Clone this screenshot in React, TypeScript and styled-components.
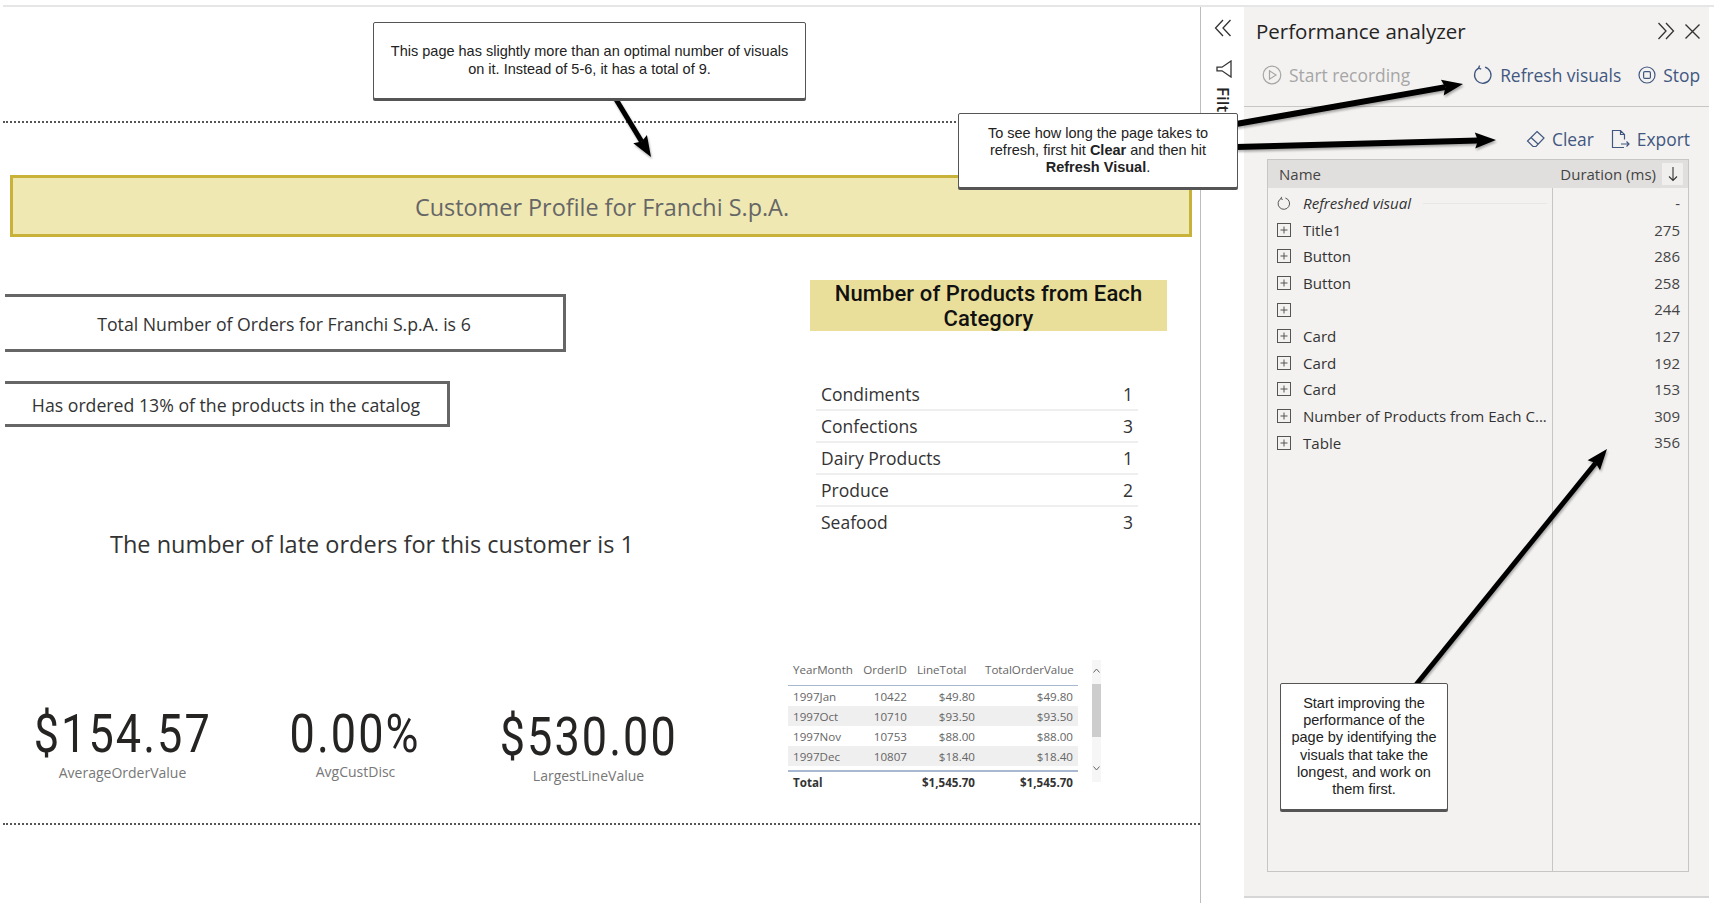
import React from "react";
import styled, { createGlobalStyle } from "styled-components";

const GlobalStyle = createGlobalStyle`
  html, body {
    margin: 0;
    padding: 0;
    background: #fff;
    font-family: "Open Sans", "Noto Sans", sans-serif;
  }
  * { box-sizing: border-box; }
`;

const Page = styled.div`
  position: relative;
  width: 1714px;
  height: 905px;
  overflow: hidden;
  padding-top: 5px;
`;

const TopStrip = styled.div`
  height: 2px;
  margin-left: 3px;
  background: #e6e6e6;
`;

const Shell = styled.div`
  display: flex;
  width: 1706px;
  height: 896px;
  margin-left: 3px;
`;

const Report = styled.main`
  width: 1197px;
  flex: none;
`;

const HeaderBand = styled.div`
  height: 116px;
  border-bottom: 2px dotted #555;
`;

const Banner = styled.h1`
  display: flex;
  align-items: center;
  justify-content: center;
  width: 1182px;
  height: 62px;
  margin: 52px 0 0 7px;
  padding: 2px 0 0 2px;
  background: #efe8b3;
  border: 3px solid #c9b239;
  font-size: 23.4px;
  font-weight: 400;
  color: #666;
`;

const VisualArea = styled.div`
  display: grid;
  grid-template-columns: 785px 1fr;
  height: 545px;
  margin-top: 43px;
  border-bottom: 2px dotted #555;
`;

const LeftColumn = styled.section`
  display: flex;
  flex-direction: column;
  align-items: flex-start;
`;

const RightColumn = styled.section`
  display: flex;
  flex-direction: column;
  align-items: flex-start;
`;

const FactBox = styled.div<{ $width: number; $height: number; $top: number }>`
  display: flex;
  align-items: center;
  justify-content: center;
  width: ${(p) => p.$width}px;
  height: ${(p) => p.$height}px;
  margin: ${(p) => p.$top}px 0 0 2px;
  padding-top: 1px;
  border: 3px solid #666;
  border-left: 0;
  font-size: 17.7px;
  color: #333;
  white-space: nowrap;
`;

const LateOrders = styled.div`
  margin: 100px 0 0 107px;
  font-size: 23.5px;
  line-height: 34px;
  color: #333;
  white-space: nowrap;
`;

const KpiRow = styled.div`
  display: grid;
  grid-template-columns: repeat(3, 233px);
  margin: 146px 0 0 3px;
`;

const Kpi = styled.div<{ $drop: number }>`
  display: flex;
  flex-direction: column;
  align-items: center;
  padding-top: ${(p) => p.$drop}px;
`;

const KpiValue = styled.div`
  font-family: "Roboto", sans-serif;
  font-size: 53px;
  font-weight: 400;
  line-height: 54px;
  letter-spacing: 2.4px;
  color: #252423;
  transform: scaleX(0.85);
`;

const KpiLabel = styled.div<{ $gap: number }>`
  margin-top: ${(p) => p.$gap}px;
  font-size: 14px;
  line-height: 20px;
  color: #777;
`;

const CategoryTitle = styled.h2`
  width: 357px;
  height: 51px;
  margin: 0 0 0 22px;
  padding-top: 1px;
  background: #e9df9a;
  font-family: "Roboto", sans-serif;
  font-size: 22px;
  font-weight: 500;
  line-height: 25px;
  letter-spacing: 0.1px;
  text-align: center;
  color: #111;
`;

const CategoryTable = styled.div`
  width: 322px;
  margin: 48px 0 0 28px;
`;

const CategoryRow = styled.div`
  display: flex;
  justify-content: space-between;
  height: 32px;
  padding: 0 5px;
  border-bottom: 2px solid #eeeeee;
  font-size: 17.5px;
  line-height: 30px;
  color: #333;
  &:last-child { border-bottom: 0; }
`;

const OrdersWrap = styled.div`
  display: flex;
  gap: 14px;
  margin-top: 121px;
`;

const OrdersTable = styled.div`
  width: 290px;
  font-size: 11.6px;
`;

const OrdersRow = styled.div<{ $kind?: "head" | "odd" | "even" | "total" }>`
  display: grid;
  grid-template-columns: 70px 54px 68px 98px;
  align-items: center;
  height: ${(p) => (p.$kind === "head" ? 26 : p.$kind === "total" ? 22 : 20)}px;
  padding-bottom: ${(p) => (p.$kind === "head" ? 7 : 0)}px;
  background: ${(p) => (p.$kind === "even" ? "#f0efef" : "transparent")};
  border-bottom: ${(p) => (p.$kind === "head" ? "1px solid #a8b8d0" : "0")};
  border-top: ${(p) => (p.$kind === "total" ? "2px solid #a8b8d0" : "0")};
  margin-top: ${(p) => (p.$kind === "total" ? 4 : 0)}px;
  font-weight: ${(p) => (p.$kind === "total" ? 700 : 400)};
  color: ${(p) => (p.$kind === "total" ? "#333" : "#666")};
`;

const OrdersCell = styled.div<{ $right?: boolean }>`
  padding: 0 5px;
  text-align: ${(p) => (p.$right ? "right" : "left")};
  white-space: nowrap;
`;

const ScrollTrack = styled.div`
  position: relative;
  display: flex;
  flex-direction: column;
  justify-content: space-between;
  align-items: center;
  width: 9px;
  height: 122px;
  padding: 8px 0 11px;
  background: #f6f6f6;
  color: #666;
`;

const ScrollThumb = styled.div`
  position: absolute;
  top: 24px;
  left: 0;
  width: 9px;
  height: 53px;
  background: #cdcdcd;
`;

const FilterRail = styled.aside`
  width: 44px;
  flex: none;
  display: flex;
  flex-direction: column;
  align-items: center;
  padding-top: 12px;
  border-left: 1px solid #bdbdbd;
  color: #333;
`;

const FunnelSlot = styled.div`
  margin: 23px 0 0 3px;
  height: 18px;
`;

const RailLabel = styled.div`
  margin-top: 9px;
  writing-mode: vertical-rl;
  font-size: 17px;
  font-weight: 600;
  line-height: 20px;
  color: #252423;
`;

const Panel = styled.aside`
  width: 465px;
  height: 891px;
  flex: none;
  display: flex;
  flex-direction: column;
  background: #f3f2f1;
  border-bottom: 2px solid #d6d6d6;
`;

const PanelHeader = styled.header`
  display: flex;
  align-items: center;
  justify-content: space-between;
  height: 50px;
  padding: 0 8px 2px 12px;
  font-size: 20.5px;
  color: #252423;
`;

const PanelIcons = styled.div`
  display: flex;
  align-items: center;
  gap: 9px;
`;

const RecordBar = styled.div`
  display: flex;
  align-items: center;
  height: 50px;
  padding: 0 9px 13px 18px;
  border-bottom: 1px solid #c8c6c4;
`;

const ExportBar = styled.div`
  display: flex;
  align-items: center;
  justify-content: flex-end;
  gap: 17px;
  height: 52px;
  padding: 12px 19px 0 0;
`;

const ToolButton = styled.div<{ $off?: boolean; $push?: number }>`
  display: flex;
  align-items: center;
  gap: 7px;
  margin-left: ${(p) => p.$push ?? 0}px;
  font-size: 17.4px;
  white-space: nowrap;
  color: ${(p) => (p.$off ? "#a6a6a6" : "#41577f")};
`;

const Analyzer = styled.div`
  display: flex;
  flex-direction: column;
  width: 422px;
  height: 713px;
  margin-left: 23px;
  border: 1px solid #c8c6c4;
`;

const AnalyzerHead = styled.div`
  display: flex;
  align-items: center;
  justify-content: space-between;
  height: 28px;
  padding: 0 5px 0 11px;
  background: #e1dfdd;
  font-size: 15px;
  color: #444;
`;

const SortGroup = styled.div`
  display: flex;
  align-items: center;
  gap: 6px;
`;

const SortBox = styled.div`
  display: flex;
  align-items: center;
  justify-content: center;
  width: 21px;
  height: 22px;
  background: #f0efee;
`;

const AnalyzerBody = styled.div`
  flex: 1;
  display: grid;
  grid-template-columns: 285px 1fr;
`;

const NameColumn = styled.div`
  padding-top: 2px;
  border-right: 1px solid #c8c6c4;
`;

const DurationColumn = styled.div`
  padding-top: 2px;
`;

const NameRow = styled.div<{ $italic?: boolean }>`
  display: flex;
  align-items: center;
  gap: 12px;
  height: 26.6px;
  padding-left: 9px;
  font-size: 15.1px;
  font-style: ${(p) => (p.$italic ? "italic" : "normal")};
  color: #333;
  white-space: nowrap;
`;

const RingSlot = styled.div`
  display: flex;
  justify-content: center;
  width: 14px;
`;

const FaintRule = styled.div`
  flex: 1;
  height: 1px;
  margin-right: 5px;
  background: #e9e7e6;
`;

const DurationRow = styled.div`
  height: 26.6px;
  padding-right: 8px;
  font-size: 15px;
  line-height: 26.6px;
  text-align: right;
  color: #444;
`;

const ArrowLayer = styled.svg`
  position: absolute;
  inset: 0;
  z-index: 1;
  pointer-events: none;
  filter: drop-shadow(1px 2px 1px rgba(0, 0, 0, 0.3));
`;

const Callout = styled.div<{ $x: number; $y: number; $w: number; $h: number }>`
  position: absolute;
  z-index: 2;
  left: ${(p) => p.$x}px;
  top: ${(p) => p.$y}px;
  width: ${(p) => p.$w}px;
  height: ${(p) => p.$h}px;
  display: flex;
  align-items: center;
  justify-content: center;
  padding: 0 8px;
  background: #fff;
  border: 1px solid #555;
  border-radius: 2px;
  box-shadow: 0 2px 0 #555;
  font-family: "Liberation Sans", Arial, sans-serif;
  font-size: 14.5px;
  line-height: 17.3px;
  text-align: center;
  color: #222;
`;

const Arrow = ({ tail, tip, width = 5 }: { tail: number[]; tip: number[]; width?: number }) => {
  const dx = tip[0] - tail[0];
  const dy = tip[1] - tail[1];
  const len = Math.hypot(dx, dy);
  const ux = dx / len;
  const uy = dy / len;
  const baseX = tip[0] - ux * 18;
  const baseY = tip[1] - uy * 18;
  const head = [
    `${tip[0]},${tip[1]}`,
    `${baseX - uy * 8 - ux * 3},${baseY + ux * 8 - uy * 3}`,
    `${baseX},${baseY}`,
    `${baseX + uy * 8 - ux * 3},${baseY - ux * 8 - uy * 3}`,
  ].join(" ");
  return (
    <g>
      <line x1={tail[0]} y1={tail[1]} x2={baseX} y2={baseY} stroke="#000" strokeWidth={width} />
      <polygon points={head} fill="#000" />
    </g>
  );
};

const ChevronsIcon = ({ left }: { left?: boolean }) => (
  <svg width="18" height="18" viewBox="0 0 18 18" fill="none" stroke="#333" strokeWidth="1.3">
    <path d={left ? "M9 1 1.5 9 9 17M16.5 1 9 9l7.5 8" : "M9 1l7.5 8L9 17M1.5 1 9 9l-7.5 8"} />
  </svg>
);

const CloseIcon = () => (
  <svg width="17" height="17" viewBox="0 0 17 17" fill="none" stroke="#333" strokeWidth="1.4">
    <path d="M1.5 1.5l14 14M15.5 1.5l-14 14" />
  </svg>
);

const FunnelIcon = () => (
  <svg width="16" height="18" viewBox="0 0 16 18" fill="none" stroke="#333" strokeWidth="1.3">
    <path d="M15 1 6 7.2H1v3.6h5L15 17z" />
  </svg>
);

const PlayIcon = () => (
  <svg width="20" height="20" viewBox="0 0 20 20" fill="none" stroke="#a6a6a6" strokeWidth="1.2">
    <circle cx="10" cy="10" r="8.8" />
    <path d="M7.5 5.8 14 10l-6.5 4.2z" />
  </svg>
);

const RefreshIcon = ({ size = 20, color = "#41577f" }: { size?: number; color?: string }) => (
  <svg width={size} height={size} viewBox="0 0 20 20" fill="none" stroke={color} strokeWidth="1.3">
    <path d="M12 2.2A8.2 8.2 0 1 1 6 2.8" />
    <path d="M6.6 .6 5.6 3.2 8.2 4.2" />
  </svg>
);

const StopIcon = () => (
  <svg width="18" height="18" viewBox="0 0 18 18" fill="none" stroke="#41577f" strokeWidth="1.2">
    <circle cx="9" cy="9" r="8" />
    <rect x="5.6" y="5.6" width="6.8" height="6.8" rx="1.2" />
  </svg>
);

const EraserIcon = () => (
  <svg width="19" height="18" viewBox="0 0 19 18" fill="none" stroke="#41577f" strokeWidth="1.2">
    <path d="M11 1.5 18 8l-8 8.5H7L1.5 11zM5 7.5l7 6.5" />
  </svg>
);

const ExportIcon = () => (
  <svg width="19" height="20" viewBox="0 0 19 20" fill="none" stroke="#41577f" strokeWidth="1.2">
    <path d="M13 18.5H1.5v-17h8l4 4v5M9.5 1.5v4h4M10 15h8M15.5 12.5 18 15l-2.5 2.5" />
  </svg>
);

const ExpandIcon = () => (
  <svg width="14" height="14" viewBox="0 0 14 14" fill="none" stroke="#555" strokeWidth="1">
    <rect x=".5" y=".5" width="13" height="13" />
    <path d="M7 3.5v7M3.5 7h7" />
  </svg>
);

const SortIcon = () => (
  <svg width="12" height="16" viewBox="0 0 12 16" fill="none" stroke="#333" strokeWidth="1.1">
    <path d="M6 1v13.5M2 10.5l4 4 4-4" />
  </svg>
);

const ScrollChevron = ({ up }: { up?: boolean }) => (
  <svg width="7" height="5" viewBox="0 0 7 5" fill="none" stroke="#666" strokeWidth="1">
    <path d={up ? "M.5 4.5 3.5 1l3 3.5" : "M.5 .5 3.5 4l3-3.5"} />
  </svg>
);

const categories = [
  ["Condiments", "1"],
  ["Confections", "3"],
  ["Dairy Products", "1"],
  ["Produce", "2"],
  ["Seafood", "3"],
];

const orders = [
  ["1997Jan", "10422", "$49.80", "$49.80"],
  ["1997Oct", "10710", "$93.50", "$93.50"],
  ["1997Nov", "10753", "$88.00", "$88.00"],
  ["1997Dec", "10807", "$18.40", "$18.40"],
];

const visuals = [
  ["Title1", "275"],
  ["Button", "286"],
  ["Button", "258"],
  ["", "244"],
  ["Card", "127"],
  ["Card", "192"],
  ["Card", "153"],
  ["Number of Products from Each C...", "309"],
  ["Table", "356"],
];

const kpis = [
  { value: "$154.57", label: "AverageOrderValue", drop: 0, gap: 2 },
  { value: "0.00%", label: "AvgCustDisc", drop: 0, gap: 1 },
  { value: "$530.00", label: "LargestLineValue", drop: 3, gap: 2 },
];

export default function App() {
  return (
    <Page>
      <GlobalStyle />
      <TopStrip />
      <Shell>
        <Report>
          <HeaderBand />
          <Banner>Customer Profile for Franchi S.p.A.</Banner>
          <VisualArea>
            <LeftColumn>
              <FactBox $width={561} $height={58} $top={14}>
                Total Number of Orders for Franchi S.p.A. is 6
              </FactBox>
              <FactBox $width={445} $height={46} $top={29}>
                Has ordered 13% of the products in the catalog
              </FactBox>
              <LateOrders>The number of late orders for this customer is 1</LateOrders>
              <KpiRow>
                {kpis.map((k) => (
                  <Kpi key={k.label} $drop={k.drop}>
                    <KpiValue>{k.value}</KpiValue>
                    <KpiLabel $gap={k.gap}>{k.label}</KpiLabel>
                  </Kpi>
                ))}
              </KpiRow>
            </LeftColumn>
            <RightColumn>
              <CategoryTitle>Number of Products from Each Category</CategoryTitle>
              <CategoryTable>
                {categories.map(([name, count]) => (
                  <CategoryRow key={name}>
                    <span>{name}</span>
                    <span>{count}</span>
                  </CategoryRow>
                ))}
              </CategoryTable>
              <OrdersWrap>
                <OrdersTable>
                  <OrdersRow $kind="head">
                    <OrdersCell>YearMonth</OrdersCell>
                    <OrdersCell $right>OrderID</OrdersCell>
                    <OrdersCell>LineTotal</OrdersCell>
                    <OrdersCell $right>TotalOrderValue</OrdersCell>
                  </OrdersRow>
                  {orders.map((o, i) => (
                    <OrdersRow key={o[0]} $kind={i % 2 ? "even" : "odd"}>
                      <OrdersCell>{o[0]}</OrdersCell>
                      <OrdersCell $right>{o[1]}</OrdersCell>
                      <OrdersCell $right>{o[2]}</OrdersCell>
                      <OrdersCell $right>{o[3]}</OrdersCell>
                    </OrdersRow>
                  ))}
                  <OrdersRow $kind="total">
                    <OrdersCell>Total</OrdersCell>
                    <OrdersCell $right />
                    <OrdersCell $right>$1,545.70</OrdersCell>
                    <OrdersCell $right>$1,545.70</OrdersCell>
                  </OrdersRow>
                </OrdersTable>
                <ScrollTrack>
                  <ScrollChevron up />
                  <ScrollThumb />
                  <ScrollChevron />
                </ScrollTrack>
              </OrdersWrap>
            </RightColumn>
          </VisualArea>
        </Report>

        <FilterRail>
          <ChevronsIcon left />
          <FunnelSlot>
            <FunnelIcon />
          </FunnelSlot>
          <RailLabel>Filters</RailLabel>
        </FilterRail>

        <Panel>
          <PanelHeader>
            Performance analyzer
            <PanelIcons>
              <ChevronsIcon />
              <CloseIcon />
            </PanelIcons>
          </PanelHeader>
          <RecordBar>
            <ToolButton $off>
              <PlayIcon />
              Start recording
            </ToolButton>
            <ToolButton $push={63}>
              <RefreshIcon />
              Refresh visuals
            </ToolButton>
            <ToolButton $push={17}>
              <StopIcon />
              Stop
            </ToolButton>
          </RecordBar>
          <ExportBar>
            <ToolButton>
              <EraserIcon />
              Clear
            </ToolButton>
            <ToolButton>
              <ExportIcon />
              Export
            </ToolButton>
          </ExportBar>
          <Analyzer>
            <AnalyzerHead>
              Name
              <SortGroup>
                Duration (ms)
                <SortBox>
                  <SortIcon />
                </SortBox>
              </SortGroup>
            </AnalyzerHead>
            <AnalyzerBody>
              <NameColumn>
                <NameRow $italic>
                  <RingSlot>
                    <RefreshIcon size={17} color="#444" />
                  </RingSlot>
                  Refreshed visual
                  <FaintRule />
                </NameRow>
                {visuals.map(([name], i) => (
                  <NameRow key={i}>
                    <ExpandIcon />
                    {name}
                  </NameRow>
                ))}
              </NameColumn>
              <DurationColumn>
                <DurationRow>-</DurationRow>
                {visuals.map(([, ms], i) => (
                  <DurationRow key={i}>{ms}</DurationRow>
                ))}
              </DurationColumn>
            </AnalyzerBody>
          </Analyzer>
        </Panel>
      </Shell>

      <ArrowLayer width="1714" height="905" viewBox="0 0 1714 905">
        <Arrow tail={[614, 96]} tip={[651, 157]} />
        <Arrow tail={[1236, 124]} tip={[1463, 84]} width={6} />
        <Arrow tail={[1236, 147]} tip={[1496, 140]} width={6} />
        <Arrow tail={[1415, 686]} tip={[1607, 449]} />
      </ArrowLayer>

      <Callout $x={373} $y={22} $w={433} $h={77}>
        <div>
          This page has slightly more than an optimal number of visuals
          <br />
          on it. Instead of 5-6, it has a total of 9.
        </div>
      </Callout>
      <Callout $x={958} $y={113} $w={280} $h={75}>
        <div>
          To see how long the page takes to
          <br />
          refresh, first hit <b>Clear</b> and then hit
          <br />
          <b>Refresh Visual</b>.
        </div>
      </Callout>
      <Callout $x={1280} $y={683} $w={168} $h={127}>
        <div>
          Start improving the
          <br />
          performance of the
          <br />
          page by identifying the
          <br />
          visuals that take the
          <br />
          longest, and work on
          <br />
          them first.
        </div>
      </Callout>
    </Page>
  );
}
